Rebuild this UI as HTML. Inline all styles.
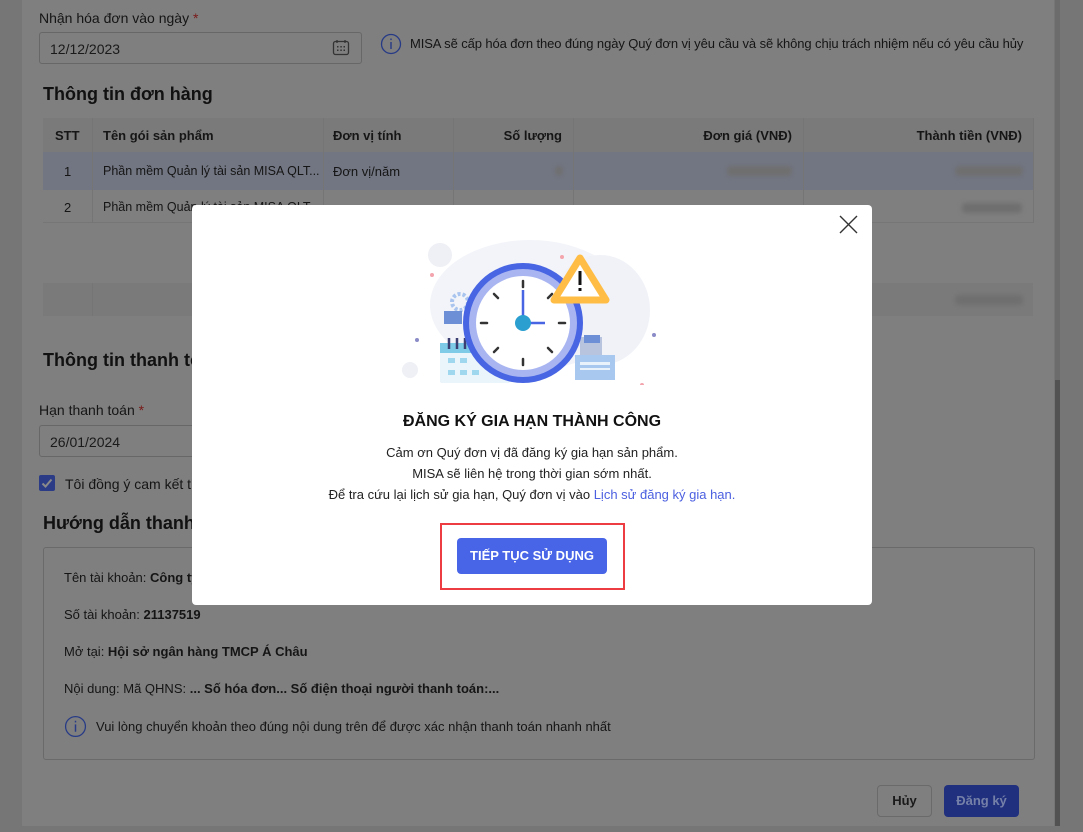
<!DOCTYPE html>
<html><head><meta charset="utf-8">
<style>
*{box-sizing:border-box;margin:0;padding:0}
body{width:1083px;height:832px;overflow:hidden;background:#767676;font-family:"Liberation Sans",Roboto,"Noto Sans CJK SC",sans-serif;position:relative;color:#141414}
.abs{position:absolute}
#panel{left:22px;top:0;width:1032px;height:826px;background:#7f7f7f}
.lbl{font-size:14px;color:#151515}
.req{color:#7a1a1a}
.inp{border:1px solid #676767;border-radius:3px;height:32px;background:#7f7f7f;font-size:14px;padding:8px 10px;color:#1a1a1a}
.h{font-size:18px;font-weight:bold;color:#111}
.th{font-size:13px;font-weight:bold;color:#161616}
.td{font-size:13px;color:#151515}
.blur{background:#6f6f6f;height:10px;border-radius:4px;filter:blur(2px)}
.vl{width:1px;background:#757575}
</style></head><body>
<div id="panel" class="abs"></div>
<div class="abs" style="left:1055px;top:0;width:5px;height:380px;background:#6c6c6c"></div>
<div class="abs" style="left:1055px;top:380px;width:5px;height:446px;background:#525252"></div>

<div class="abs lbl" style="left:39px;top:10px">Nhận hóa đơn vào ngày <span class="req">*</span></div>
<div class="abs inp" style="left:39px;top:32px;width:323px">12/12/2023</div>
<svg class="abs" style="left:332px;top:39px" width="18" height="18" viewBox="0 0 18 18"><rect x="1.5" y="2.5" width="15" height="13" rx="2" fill="none" stroke="#333" stroke-width="1.3"/><line x1="5" y1="1" x2="5" y2="4" stroke="#333" stroke-width="1.3"/><line x1="13" y1="1" x2="13" y2="4" stroke="#333" stroke-width="1.3"/><g fill="#333"><rect x="5" y="7" width="1.5" height="1.5"/><rect x="8.3" y="7" width="1.5" height="1.5"/><rect x="11.5" y="7" width="1.5" height="1.5"/><rect x="5" y="10.5" width="1.5" height="1.5"/><rect x="8.3" y="10.5" width="1.5" height="1.5"/><rect x="11.5" y="10.5" width="1.5" height="1.5"/></g></svg>
<svg class="abs" style="left:380px;top:33px" width="22" height="22" viewBox="0 0 22 22"><circle cx="11" cy="11" r="9.5" fill="none" stroke="#263a86" stroke-width="1.3"/><rect x="10.3" y="9" width="1.4" height="7" fill="#263a86"/><rect x="10.3" y="5.5" width="1.4" height="1.6" fill="#263a86"/></svg>
<div class="abs lbl" style="left:410px;top:36px;font-size:13px;letter-spacing:-0.1px">MISA sẽ cấp hóa đơn theo đúng ngày Quý đơn vị yêu cầu và sẽ không chịu trách nhiệm nếu có yêu cầu hủy</div>

<div class="abs h" style="left:43px;top:84px">Thông tin đơn hàng</div>
<div class="abs" style="left:43px;top:118px;width:990px;height:34px;background:#7a7a7a"></div>
<div class="abs" style="left:43px;top:152px;width:990px;height:38px;background:#727682"></div>
<div class="abs" style="left:43px;top:190px;width:990px;height:33px;border-bottom:1px solid #767676"></div>
<div class="abs" style="left:43px;top:283px;width:990px;height:33px;background:#7a7a7a"></div>
<div class="abs vl" style="left:92px;top:118px;height:105px"></div>
<div class="abs vl" style="left:323px;top:118px;height:105px"></div>
<div class="abs vl" style="left:453px;top:118px;height:105px"></div>
<div class="abs vl" style="left:573px;top:118px;height:105px"></div>
<div class="abs vl" style="left:803px;top:118px;height:105px"></div>
<div class="abs vl" style="left:1033px;top:118px;height:105px"></div>
<div class="abs vl" style="left:92px;top:283px;height:33px"></div>
<div class="abs th" style="left:55px;top:128px">STT</div>
<div class="abs th" style="left:103px;top:128px">Tên gói sản phẩm</div>
<div class="abs th" style="left:333px;top:128px">Đơn vị tính</div>
<div class="abs th" style="left:453px;top:128px;width:109px;text-align:right">Số lượng</div>
<div class="abs th" style="left:573px;top:128px;width:219px;text-align:right">Đơn giá (VNĐ)</div>
<div class="abs th" style="left:803px;top:128px;width:219px;text-align:right">Thành tiền (VNĐ)</div>
<div class="abs td" style="left:64px;top:164px">1</div>
<div class="abs td" style="left:103px;top:164px;font-size:12.5px">Phần mềm Quản lý tài sản MISA QLT...</div>
<div class="abs td" style="left:333px;top:164px">Đơn vị/năm</div>
<div class="abs td" style="left:64px;top:200px">2</div>
<div class="abs td" style="left:103px;top:200px;font-size:12.5px">Phần mềm Quản lý tài sản MISA QLT...</div>
<div class="abs blur" style="left:555px;top:166px;width:8px"></div>
<div class="abs blur" style="left:727px;top:166px;width:65px"></div>
<div class="abs blur" style="left:955px;top:166px;width:68px"></div>
<div class="abs blur" style="left:962px;top:203px;width:60px"></div>
<div class="abs blur" style="left:955px;top:295px;width:68px"></div>

<div class="abs h" style="left:43px;top:350px">Thông tin thanh toán</div>
<div class="abs lbl" style="left:39px;top:402px">Hạn thanh toán <span class="req">*</span></div>
<div class="abs inp" style="left:39px;top:425px;width:323px">26/01/2024</div>
<div class="abs" style="left:39px;top:475px;width:16px;height:16px;background:#2b3b86;border-radius:2px"></div>
<svg class="abs" style="left:39px;top:475px" width="16" height="16"><path d="M3.5 8.5l3 3 6-7" stroke="#8a8a8a" stroke-width="2" fill="none"/></svg>
<div class="abs lbl" style="left:65px;top:476px">Tôi đồng ý cam kết thanh toán</div>
<div class="abs h" style="left:43px;top:513px">Hướng dẫn thanh toán</div>
<div class="abs" style="left:43px;top:547px;width:992px;height:213px;border:1px solid #6a6a6a;border-radius:3px"></div>
<div class="abs lbl" style="left:64px;top:570px;font-size:13px">Tên tài khoản: <b>Công ty</b></div>
<div class="abs lbl" style="left:64px;top:607px;font-size:13px">Số tài khoản: <b>21137519</b></div>
<div class="abs lbl" style="left:64px;top:644px;font-size:13px">Mở tại: <b>Hội sở ngân hàng TMCP Á Châu</b></div>
<div class="abs lbl" style="left:64px;top:681px;font-size:13px">Nội dung: Mã QHNS: <b>... Số hóa đơn... Số điện thoại người thanh toán:...</b></div>
<svg class="abs" style="left:64px;top:715px" width="23" height="23" viewBox="0 0 22 22"><circle cx="11" cy="11" r="9.5" fill="none" stroke="#263a86" stroke-width="1.2"/><rect x="10.3" y="9" width="1.4" height="7" fill="#263a86"/><rect x="10.3" y="5.5" width="1.4" height="1.6" fill="#263a86"/></svg>
<div class="abs lbl" style="left:96px;top:719px;font-size:13px">Vui lòng chuyển khoản theo đúng nội dung trên để được xác nhận thanh toán nhanh nhất</div>

<div class="abs" style="left:877px;top:785px;width:55px;height:32px;border:1px solid #6a6a6a;border-radius:4px;font-size:13px;font-weight:bold;text-align:center;line-height:30px;color:#1a1a1a">Hủy</div>
<div class="abs" style="left:944px;top:785px;width:75px;height:32px;background:#21307e;border-radius:4px;font-size:13px;font-weight:bold;text-align:center;line-height:32px;color:#7580a8">Đăng ký</div>

<div class="abs" style="left:192px;top:205px;width:680px;height:400px;background:#fff;border-radius:4px"></div>
<svg class="abs" style="left:838px;top:214px" width="21" height="21"><path d="M2 2L19 19M19 2L2 19" stroke="#333" stroke-width="1.4"/></svg>
<svg class="abs" style="left:400px;top:225px" width="260" height="160" viewBox="0 0 260 160">
<ellipse cx="130" cy="80" rx="100" ry="65" fill="#f2f4f9"/>
<ellipse cx="200" cy="85" rx="50" ry="55" fill="#f0f2f8"/>
<circle cx="40" cy="30" r="12" fill="#eef0f6"/>
<circle cx="10" cy="145" r="8" fill="#eef0f6"/>
<circle cx="32" cy="50" r="2" fill="#f3a4ac"/><circle cx="162" cy="32" r="2" fill="#f3a4ac"/><circle cx="242" cy="160" r="2" fill="#f3a4ac"/>
<circle cx="17" cy="115" r="2" fill="#8b8bc8"/><circle cx="254" cy="110" r="2" fill="#8b8bc8"/>
<circle cx="60" cy="77" r="8" fill="none" stroke="#a9c4ee" stroke-width="4" stroke-dasharray="3 2"/>
<rect x="44" y="86" width="18" height="13" fill="#6d8fd6"/>
<rect x="40" y="118" width="70" height="40" rx="2" fill="#eaf4fb"/>
<rect x="40" y="118" width="70" height="10" fill="#7ecbe7"/>
<g fill="#9fd7ef"><rect x="48" y="133" width="7" height="5"/><rect x="60" y="133" width="7" height="5"/><rect x="48" y="145" width="7" height="5"/><rect x="60" y="145" width="7" height="5"/><rect x="72" y="145" width="7" height="5"/></g>
<g stroke="#3b3f72" stroke-width="2.5"><line x1="49" y1="113" x2="49" y2="124"/><line x1="57" y1="113" x2="57" y2="124"/><line x1="65" y1="113" x2="65" y2="124"/></g>
<rect x="180" y="112" width="22" height="26" fill="#b8c3de"/>
<rect x="184" y="110" width="16" height="8" fill="#6d8fd6"/>
<rect x="175" y="130" width="40" height="25" fill="#a8c8f0"/>
<rect x="180" y="137" width="30" height="3" fill="#e9f1fb"/><rect x="180" y="143" width="30" height="2" fill="#e9f1fb"/>
<circle cx="123" cy="98" r="60" fill="#4865e3"/>
<circle cx="123" cy="98" r="54" fill="#a8b5f1"/>
<circle cx="123" cy="98" r="47" fill="#fff"/>
<g stroke="#333" stroke-width="2.5" stroke-linecap="round"><line x1="123" y1="56" x2="123" y2="62"/><line x1="123" y1="134" x2="123" y2="140"/><line x1="81" y1="98" x2="87" y2="98"/><line x1="159" y1="98" x2="165" y2="98"/><line x1="94" y1="69" x2="98" y2="73"/><line x1="152" y1="69" x2="148" y2="73"/><line x1="94" y1="127" x2="98" y2="123"/><line x1="152" y1="127" x2="148" y2="123"/></g>
<line x1="123" y1="98" x2="123" y2="65" stroke="#4865e3" stroke-width="2.5"/>
<line x1="123" y1="98" x2="145" y2="98" stroke="#4865e3" stroke-width="2.5"/>
<circle cx="123" cy="98" r="8" fill="#2a9fd0"/>
<path d="M180 33L206 75H154Z" fill="#fff" stroke="#ffbd45" stroke-width="7" stroke-linejoin="round"/>
<rect x="178.5" y="46" width="3" height="14" fill="#111"/><rect x="178.5" y="63" width="3" height="3" fill="#111"/>
</svg>
<div class="abs" style="left:192px;top:413px;width:680px;text-align:center;font-size:16px;font-weight:bold;color:#111">ĐĂNG KÝ GIA HẠN THÀNH CÔNG</div>
<div class="abs" style="left:192px;top:442px;width:680px;text-align:center;font-size:13px;line-height:21px;color:#222">Cảm ơn Quý đơn vị đã đăng ký gia hạn sản phẩm.<br>MISA sẽ liên hệ trong thời gian sớm nhất.<br>Để tra cứu lại lịch sử gia hạn, Quý đơn vị vào <span style="color:#4b5fe0">Lịch sử đăng ký gia hạn.</span></div>
<div class="abs" style="left:440px;top:523px;width:185px;height:67px;border:2px solid #ee3d42"></div>
<div class="abs" style="left:457px;top:538px;width:150px;height:36px;background:#4865e8;border-radius:4px;color:#fff;font-size:13px;font-weight:bold;text-align:center;line-height:36px">TIẾP TỤC SỬ DỤNG</div>
</body></html>
